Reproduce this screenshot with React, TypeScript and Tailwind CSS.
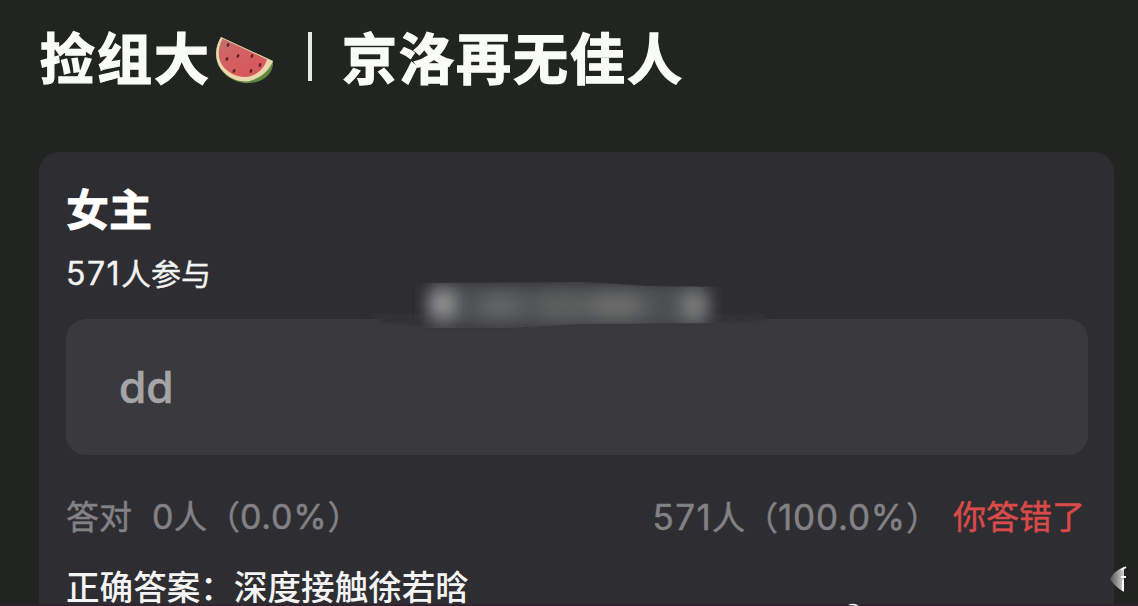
const seeds = [
  [228, 45], [238, 56], [252, 56], [227, 59], [260, 65], [234, 71], [251, 71],
];

function Watermelon() {
  return (
    <svg className="h-[54px] w-[60px] shrink-0" viewBox="215 34 60 54">
      <defs>
        <linearGradient id="flesh" x1="0" y1="0" x2="0.6" y2="1">
          <stop offset="0" stopColor="#c4706e" />
          <stop offset="0.5" stopColor="#d46062" />
          <stop offset="1" stopColor="#d8585c" />
        </linearGradient>
      </defs>
      <path d="M221 37 L273 61 C274 72 265 82 250 83 C240 84 228 79 222 71 C213 60 215 47 221 37Z" fill="#5d8840" />
      <path d="M221 37 L273 61 C269 71 259 80 246 81.500 C236 81.500 227 77 221 69 C214 59 215 47 221 37Z" fill="#ead7ad" />
      <path d="M222.500 38.500 L267 59.500 C264 69 256 76.500 245 77 C235 77 227 72 222 65 C217 56 218 48 222.500 38.500Z" fill="url(#flesh)" />
      {seeds.map(([x, y]) => (
        <ellipse key={`${x}-${y}`} cx={x} cy={y} rx="1.300" ry="2" fill="#612326" transform={`rotate(25 ${x} ${y})`} />
      ))}
    </svg>
  );
}

/* Smudged strip between the participant count and the answer box */
function Smudge() {
  return (
    <svg className="absolute left-[325px] top-[126px] h-[56px] w-[410px]" viewBox="365 278 410 56">
      <defs>
        <clipPath id="strip">
          <path d="M405 283 L585 282 L650 286 L730 287 L730 323 L580 324 L510 328 L405 328Z" />
        </clipPath>
        <filter id="soft" x="-50%" y="-100%" width="200%" height="300%">
          <feGaussianBlur stdDeviation="8" />
        </filter>
        <filter id="edge" x="-10%" y="-50%" width="120%" height="200%">
          <feGaussianBlur stdDeviation="1.500" />
        </filter>
      </defs>
      <path d="M370 314 H768 L766 320 L735 322 L700 323 H580 L510 327 H425 L385 322Z" fill="#313135" filter="url(#edge)" />
      <g clipPath="url(#strip)">
        <rect x="430" y="282" width="280" height="46" fill="#4e4f51" filter="url(#soft)" />
        <ellipse cx="444" cy="304" rx="14" ry="15" fill="#909091" filter="url(#soft)" />
        <ellipse cx="502" cy="306" rx="24" ry="11" fill="#646566" filter="url(#soft)" />
        <ellipse cx="566" cy="306" rx="34" ry="11" fill="#5f6161" filter="url(#soft)" />
        <ellipse cx="618" cy="306" rx="30" ry="13" fill="#6a6b6b" filter="url(#soft)" />
        <ellipse cx="695" cy="306" rx="13" ry="15" fill="#7c7c7c" filter="url(#soft)" />
      </g>
    </svg>
  );
}

export default function App() {
  return (
    <div className="relative h-[606px] w-[1138px] overflow-hidden bg-[#222422] font-['Inter','Noto_Sans_CJK_SC',sans-serif] text-white">
      <h1 className="flex h-[152px] items-start pl-[40px] pt-[18px] text-[55px] font-bold leading-[82px] tracking-[2px] text-[#fafcfa] [-webkit-text-stroke:1.3px_#fafcfa]">
        <span className="w-[175px] whitespace-nowrap">捡组大</span>
        <span className="pt-[16px]"><Watermelon /></span>
        <span className="ml-[33px] mt-[14px] h-[49px] w-[4px] shrink-0 bg-[#e6e8e6]" />
        <span className="ml-[30px] whitespace-nowrap">京洛再无佳人</span>
      </h1>

      <section className="relative ml-[39px] h-[480px] w-[1075px] rounded-[20px] bg-[#2e2d31] px-[27px] pt-[26px]">
        <h2 className="text-[43px] font-bold leading-[64px] [-webkit-text-stroke:0.8px_#fff]">女主</h2>
        <p className="mt-[10px] h-[44px] text-[30px] leading-[44px] text-[#f2f2f2] [-webkit-text-stroke:0.4px_#f2f2f2]">
          <span className="text-[32px] tracking-[1.5px]">571</span>人参与
        </p>

        <div className="mt-[23px] flex h-[136px] w-[1022px] items-center rounded-[20px] bg-[#3a393d] pl-[53px] text-[44px] font-medium text-[#a5a4a9] [-webkit-text-stroke:0.6px_#a5a4a9]">
          dd
        </div>

        <div className="mt-[38px] flex h-[48px] w-[1019px] items-center whitespace-nowrap text-[33px] leading-[48px] text-[#828186] [-webkit-text-stroke:0.5px_currentColor]">
          <span className="w-[86px]">答对</span>
          <span><span className="text-[34px] tracking-[0.5px]">0</span>人（<span className="text-[34px] tracking-[0.8px]">0.0%</span>）</span>
          <span className="ml-auto"><span className="text-[35px] tracking-[1.4px]">571</span>人（<span className="text-[35px] tracking-[0.8px]">100.0%</span>）</span>
          <span className="ml-[14px] text-[#d84b49]">你答错了</span>
        </div>

        <p className="mt-[23px] whitespace-nowrap text-[33.600px] font-medium leading-[48px] text-[#f4f4f4]">正确答案：深度接触徐若晗</p>
        <Smudge />
      </section>

      {/* Leftover fragments along the right and bottom edges */}
      <svg className="absolute bottom-0 left-0 h-[46px] w-[1138px]" viewBox="0 560 1138 46">
        <defs>
          <linearGradient id="arrow">
            <stop offset="0" stopColor="#525452" />
            <stop offset="1" stopColor="#d0d1d0" />
          </linearGradient>
        </defs>
        <rect y="604.500" width="1138" height="1.500" fill="#33202f" />
        <path d="M1110 579 Q1115 570 1124 567 V592 Q1115 587 1110 579Z" fill="url(#arrow)" />
        <path d="M1121 570 L1126 567 M1121 577 H1126 M1123 580 V591" stroke="#fff" strokeWidth="2" />
        <path d="M848 605 Q854 602 859 606Z" fill="#fff" />
      </svg>
    </div>
  );
}
